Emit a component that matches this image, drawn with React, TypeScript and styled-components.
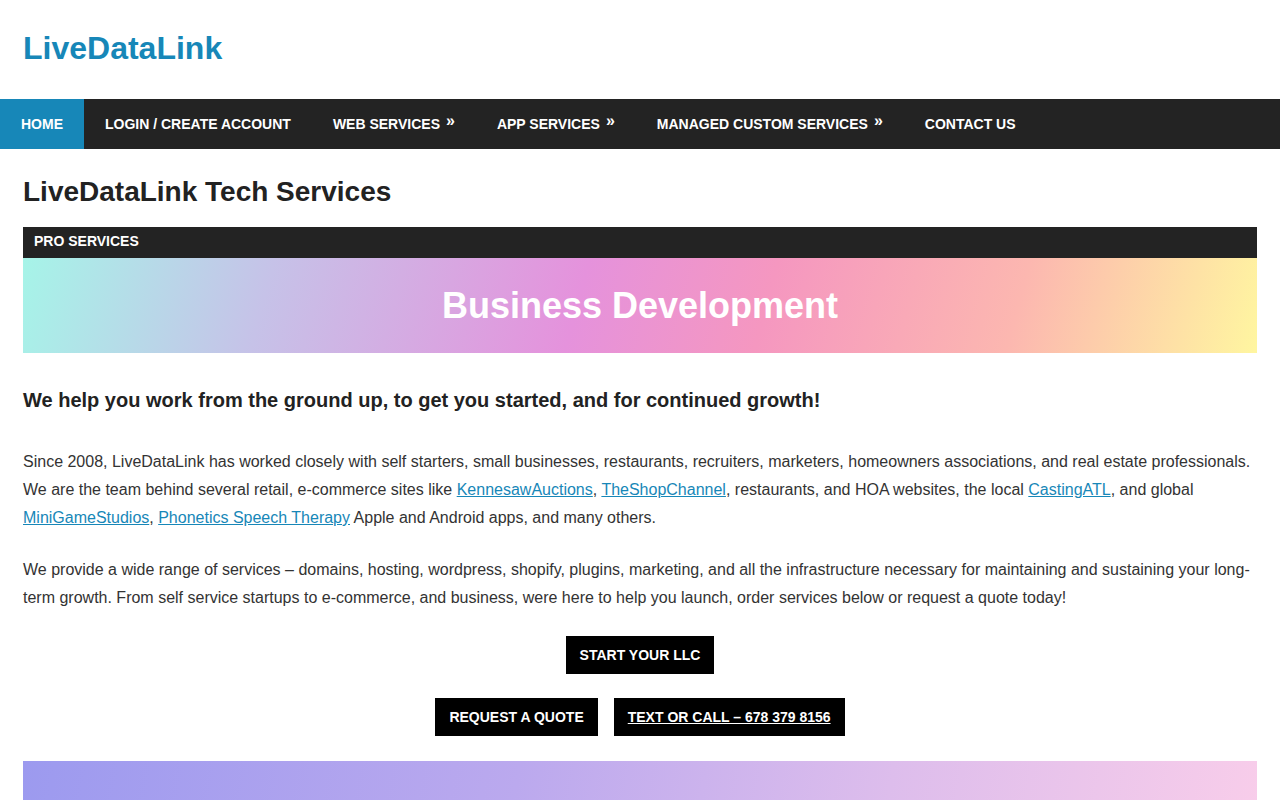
import styled, { createGlobalStyle } from 'styled-components'

const GlobalStyle = createGlobalStyle`
  html, body {
    margin: 0;
    padding: 0;
    background: #fff;
    font-family: "Liberation Sans", Arial, sans-serif;
    color: #333;
  }
`

const navItems = [
  { label: 'Home', active: true },
  { label: 'Login / Create Account' },
  { label: 'Web Services', sub: true },
  { label: 'App Services', sub: true },
  { label: 'Managed Custom Services', sub: true },
  { label: 'Contact Us' },
]

function App() {
  return (
    <Page>
      <GlobalStyle />
      <Header>
        <Logo>LiveDataLink</Logo>
      </Header>
      <Nav>
        {navItems.map((item) => (
          <NavItem key={item.label} $active={item.active}>
            {item.label}
            {item.sub && <Arrow>»</Arrow>}
          </NavItem>
        ))}
      </Nav>
      <Main>
        <Title>LiveDataLink Tech Services</Title>
        <SectionBar>Pro Services</SectionBar>
        <Banner>
          <BannerTitle>Business Development</BannerTitle>
        </Banner>
        <Lead>We help you work from the ground up, to get you started, and for continued growth!</Lead>
        <Para>
          Since 2008, LiveDataLink has worked closely with self starters, small businesses, restaurants, recruiters,
          marketers, homeowners associations, and real estate professionals. We are the team behind several retail,
          e-commerce sites like <Link href="#">KennesawAuctions</Link>, <Link href="#">TheShopChannel</Link>,
          restaurants, and HOA websites, the local <Link href="#">CastingATL</Link>, and global{' '}
          <Link href="#">MiniGameStudios</Link>, <Link href="#">Phonetics Speech Therapy</Link> Apple and Android apps,
          and many others.
        </Para>
        <Para>
          We provide a wide range of services – domains, hosting, wordpress, shopify, plugins, marketing, and all the
          infrastructure necessary for maintaining and sustaining your long-term growth. From self service startups to
          e-commerce, and business, were here to help you launch, order services below or request a quote today!
        </Para>
        <ButtonRow>
          <ActionButton>Start Your LLC</ActionButton>
        </ButtonRow>
        <ButtonRow>
          <ActionButton>Request A Quote</ActionButton>
          <ActionButton $underline>Text or Call – 678 379 8156</ActionButton>
        </ButtonRow>
        <FooterBanner />
      </Main>
    </Page>
  )
}

export default App

const Page = styled.div`
  width: 1280px;
`

const Header = styled.header`
  height: 99px;
  display: flex;
  align-items: center;
  padding: 0 23px;
  box-sizing: border-box;
`

const Logo = styled.a`
  font-size: 32px;
  font-weight: bold;
  color: #1787b8;
  margin-top: -2px;
`

const Nav = styled.nav`
  display: flex;
  height: 50px;
  background: #232323;
`

const NavItem = styled.a<{ $active?: boolean }>`
  display: flex;
  align-items: center;
  padding: 0 21px;
  background: ${(p) => (p.$active ? '#1787b8' : 'transparent')};
  color: #fff;
  font-size: 14px;
  font-weight: bold;
  text-transform: uppercase;
`

const Arrow = styled.span`
  font-size: 16px;
  margin-left: 6px;
  position: relative;
  top: -3px;
`

const Main = styled.main`
  padding: 0 23px;
`

const Title = styled.h1`
  margin: 27px 0 19px;
  font-size: 28px;
  font-weight: bold;
  color: #222;
  line-height: 32px;
`

const SectionBar = styled.div`
  height: 31px;
  box-sizing: border-box;
  background: #232323;
  color: #fff;
  font-size: 14px;
  font-weight: bold;
  text-transform: uppercase;
  padding: 0 11px 3px;
  display: flex;
  align-items: center;
`

const Banner = styled.div`
  height: 95px;
  display: flex;
  align-items: center;
  justify-content: center;
  background: linear-gradient(
    105deg,
    #a6f4e8 0%,
    #c6c2e8 20%,
    #e592dc 45%,
    #f597c0 60%,
    #fcb7b0 80%,
    #fff6a0 100%
  );
`

const BannerTitle = styled.h2`
  margin: 0;
  color: #fff;
  font-size: 36px;
  font-weight: bold;
`

const Lead = styled.h3`
  margin: 35px 0 0;
  font-size: 20px;
  font-weight: bold;
  color: #222;
  line-height: 24px;
`

const Para = styled.p`
  margin: 36px 0 0;
  font-size: 16px;
  line-height: 28px;
  color: #333;

  & + & {
    margin-top: 24px;
  }
`

const Link = styled.a`
  color: #1787b8;
  text-decoration: underline;
`

const ButtonRow = styled.div`
  display: flex;
  justify-content: center;
  gap: 16px;
  margin-top: 24px;

  & + & {
    margin-top: 24px;
  }
`

const ActionButton = styled.a<{ $underline?: boolean }>`
  display: inline-flex;
  align-items: center;
  height: 38px;
  padding: 0 14px;
  background: #000;
  color: #fff;
  font-size: 14px;
  font-weight: bold;
  text-transform: uppercase;
  text-decoration: ${(p) => (p.$underline ? 'underline' : 'none')};
`

const FooterBanner = styled.div`
  margin-top: 25px;
  height: 60px;
  background: linear-gradient(100deg, #9c9aef 0%, #bba9ee 40%, #ddbdec 70%, #f8cdea 100%);
`
